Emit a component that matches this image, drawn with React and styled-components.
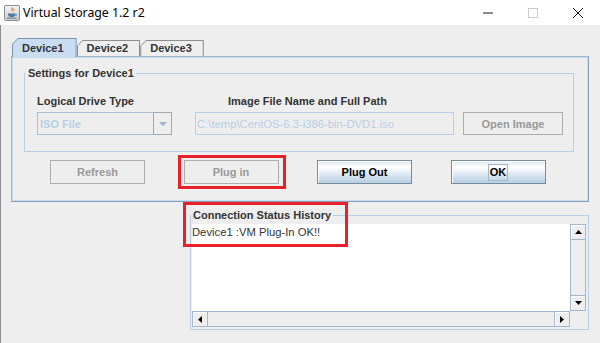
import React from "react";
import styled, { createGlobalStyle } from "styled-components";

const UI = `"Liberation Sans", Arial, sans-serif`;

const GlobalStyle = createGlobalStyle`
  html, body { margin: 0; padding: 0; background: #eeeeee; }
  body { width: 600px; height: 343px; overflow: hidden; font-family: ${UI}; }
  *, *::before, *::after { box-sizing: border-box; }
`;

const Window = styled.div`
  width: 600px;
  height: 343px;
  overflow: hidden;
  display: flex;
  flex-direction: column;
  background: #eeeeee;
`;

const TitleBar = styled.div`
  height: 25px;
  flex: none;
  background: #ffffff;
  display: flex;
  align-items: center;
`;

const AppIcon = styled.svg`
  width: 16px;
  height: 16px;
  margin-left: 4px;
  flex: none;
`;

const TitleText = styled.div`
  margin-left: 3px;
  font-family: "Segoe UI", "Noto Sans", sans-serif;
  font-size: 12.3px;
  color: #000;
  flex: 1;
`;

const Captions = styled.div`
  display: flex;
  height: 100%;
`;

const CaptionButton = styled.div`
  width: 45px;
  height: 100%;
  display: flex;
  align-items: center;
  justify-content: center;
`;

const Body = styled.div`
  flex: 1;
  border-left: 1px solid #8f8f8f;
  padding: 13px 11px 0 10px;
  display: flex;
  flex-direction: column;
`;

const TabStrip = styled.div`
  height: 18px;
  display: flex;
  align-items: flex-end;
  padding-left: 1px;
  position: relative;
  z-index: 1;
`;

const Tab = styled.div`
  position: relative;
  height: ${(p) => (p.$selected ? 19 : 16)}px;
  margin-bottom: ${(p) => (p.$selected ? -1 : 0)}px;
  padding: 0 ${(p) => (p.$selected ? 13 : 12)}px 0 10px;
  display: flex;
  align-items: center;
  font: bold 11px ${UI};
  color: #333333;
  background: ${(p) => (p.$selected ? "#7f93ad" : "#8e8e8e")};
  clip-path: polygon(6px 0, 100% 0, 100% 100%, 0 100%, 0 6px);
  &::before {
    content: "";
    position: absolute;
    inset: 1px 1px 0 1px;
    background: ${(p) => (p.$selected ? "#c8ddf2" : "#eeeeee")};
    clip-path: polygon(5px 0, 100% 0, 100% 100%, 0 100%, 0 5px);
  }
  & > span {
    position: relative;
  }
`;

const TabPanel = styled.div`
  height: 146px;
  flex: none;
  border: 1px solid #a3b7cf;
  border-right-color: #8b9fb8;
  border-bottom-color: #8b9fb8;
  box-shadow: inset 0 0 0 1px #c8ddf2;
  padding: 10px 14px 0 12px;
  display: flex;
  flex-direction: column;
`;

const Group = styled.fieldset`
  margin: 0;
  min-width: 0;
  border: 1px solid #b8cfe5;
  padding: ${(p) => p.$pad};
`;

const GroupTitle = styled.legend`
  margin-left: ${(p) => p.$offset}px;
  padding: 0 2px;
  font: bold 11px/13px ${UI};
  color: #333333;
`;

const SettingsGrid = styled.div`
  display: grid;
  grid-template-columns: 135px 23px 259px 9px 100px;
  grid-template-rows: 14px 23px;
  row-gap: 4px;
  align-items: center;
`;

const FieldLabel = styled.div`
  grid-column: ${(p) => p.$col};
  grid-row: 1;
  margin-left: ${(p) => p.$indent || 0}px;
  font: bold 11px/14px ${UI};
  color: #333333;
  white-space: nowrap;
`;

const Cell = styled.div`
  grid-column: ${(p) => p.$col};
  grid-row: 2;
  height: 23px;
  display: flex;
`;

const ComboValue = styled.div`
  flex: 1;
  border: 1px solid #a9bdd4;
  display: flex;
  align-items: center;
  padding-left: 2px;
  font: bold 11px ${UI};
  color: #b8cfe5;
`;

const ComboArrow = styled.div`
  width: 19px;
  border: 1px solid #a8a8a8;
  margin-left: -1px;
  display: flex;
  align-items: center;
  justify-content: center;
`;

const TextField = styled.div`
  flex: 1;
  border: 1px solid #b8cfe5;
  display: flex;
  align-items: center;
  padding-left: 1px;
  font: 11.25px ${UI};
  color: #b8cfe5;
  white-space: nowrap;
  overflow: hidden;
`;

const Button = styled.div`
  position: relative;
  width: ${(p) => p.$w || 95}px;
  height: ${(p) => p.$h || 24}px;
  flex: none;
  display: flex;
  align-items: center;
  justify-content: center;
  font: bold 11px ${UI};
  white-space: nowrap;
  ${(p) =>
    p.$disabled
      ? `
    border: 1px solid #adadad;
    background: #eeeeee;
    color: #999999;
  `
      : `
    border: 1px solid #7a8a99;
    background: linear-gradient(to bottom, #dde8f3 0%, #ffffff 30%, #dde8f3 60%, #b8cfe5 100%);
    box-shadow: inset 1px 1px 0 #ffffff;
    color: #000000;
  `}
`;

const Focus = styled.span`
  border: 1px solid #a3b8cc;
  padding: 1px 1px;
  line-height: 13px;
`;

const ButtonRow = styled.div`
  display: flex;
  gap: 38.5px;
  margin-top: 8px;
  padding-left: 26px;
`;

const RedMark = styled.div`
  position: absolute;
  left: ${(p) => p.$l}px;
  top: ${(p) => p.$t}px;
  right: ${(p) => p.$r}px;
  bottom: ${(p) => p.$b}px;
  ${(p) => (p.$w ? `width: ${p.$w}px;` : "")}
  ${(p) => (p.$h ? `height: ${p.$h}px;` : "")}
  border: 3px solid #e8202a;
  pointer-events: none;
`;

const HistoryWrap = styled.div`
  position: relative;
  margin: 7px 0 0 179px;
`;

const ScrollPane = styled.div`
  display: grid;
  grid-template-columns: 1fr 16px;
  grid-template-rows: 87px 16px;
`;

const TextArea = styled.div`
  background: #ffffff;
  font: 11.25px/16px ${UI};
  color: #333333;
  white-space: nowrap;
`;

const ScrollBar = styled.div`
  display: flex;
  flex-direction: ${(p) => (p.$vertical ? "column" : "row")};
  background: #eeeeee;
  border: 1px solid #a3b8cc;
`;

const Track = styled.div`
  flex: 1;
`;

const ScrollButton = styled.div`
  width: ${(p) => (p.$vertical ? "100%" : "15px")};
  height: ${(p) => (p.$vertical ? "15px" : "100%")};
  flex: none;
  background: #eeeeee;
  box-shadow: inset 1px 1px 0 #ffffff;
  ${(p) =>
    p.$side === "start"
      ? p.$vertical
        ? "border-bottom: 1px solid #a3b8cc;"
        : "border-right: 1px solid #a3b8cc;"
      : p.$vertical
      ? "border-top: 1px solid #a3b8cc;"
      : "border-left: 1px solid #a3b8cc;"}
  display: flex;
  align-items: center;
  justify-content: center;
`;

const Corner = styled.div`
  background: #eeeeee;
`;

const Arrow = ({ dir, color = "#000" }) => {
  const pts = {
    up: "0,4 7,4 3.5,0",
    down: "0,0 7,0 3.5,4",
    left: "4,0 4,7 0,3.5",
    right: "0,0 0,7 4,3.5",
  }[dir];
  const horiz = dir === "left" || dir === "right";
  return (
    <svg width={horiz ? 4 : 7} height={horiz ? 7 : 4} viewBox={horiz ? "0 0 4 7" : "0 0 7 4"}>
      <polygon points={pts} fill={color} />
    </svg>
  );
};

const ComboTriangle = () => (
  <svg width="8" height="4" viewBox="0 0 8 4">
    <polygon points="0,0 8,0 4,4" fill="#9fb4cd" />
  </svg>
);

const JavaIcon = () => (
  <AppIcon viewBox="0 0 16 16">
    <defs>
      <linearGradient id="jbg" x1="0" y1="0" x2="0" y2="1">
        <stop offset="0" stopColor="#f6f6f6" />
        <stop offset="1" stopColor="#c9c9c9" />
      </linearGradient>
    </defs>
    <rect x="0.5" y="0.5" width="15" height="15" rx="1.5" fill="url(#jbg)" stroke="#8d8d8d" />
    <path d="M8 2.5c-1.4 1.2 1.2 1.8 -0.2 3.6" stroke="#e2761b" strokeWidth="1.2" fill="none" />
    <path d="M9.8 3.5c-0.9 0.8 0.8 1.2 -0.2 2.3" stroke="#e2761b" strokeWidth="1" fill="none" />
    <path d="M4 8.5h7.2v1.2c0 1.6 -1.6 2.4 -3.6 2.4s-3.6 -0.8 -3.6 -2.4z" fill="#4f7ea8" />
    <path d="M11.2 9h0.9c0.9 0 0.9 1.4 0 1.4h-1" stroke="#4f7ea8" strokeWidth="0.8" fill="none" />
    <rect x="3" y="12.6" width="9.5" height="1" fill="#4f7ea8" />
  </AppIcon>
);

export default function App() {
  return (
    <>
      <GlobalStyle />
      <Window>
        <TitleBar>
          <JavaIcon />
          <TitleText>Virtual Storage 1.2 r2</TitleText>
          <Captions>
            <CaptionButton>
              <svg width="10" height="10" viewBox="0 0 10 10">
                <rect x="0" y="4.5" width="10" height="1" fill="#1a1a1a" />
              </svg>
            </CaptionButton>
            <CaptionButton>
              <svg width="10" height="10" viewBox="0 0 10 10">
                <rect x="0.5" y="0.5" width="9" height="9" fill="none" stroke="#cccccc" />
              </svg>
            </CaptionButton>
            <CaptionButton>
              <svg width="10" height="10" viewBox="0 0 10 10">
                <path d="M0 0L10 10M10 0L0 10" stroke="#1a1a1a" strokeWidth="1" />
              </svg>
            </CaptionButton>
          </Captions>
        </TitleBar>

        <Body>
          <TabStrip>
            <Tab $selected><span>Device1</span></Tab>
            <Tab><span>Device2</span></Tab>
            <Tab><span>Device3</span></Tab>
          </TabStrip>
          <TabPanel>
            <Group $pad="14px 12px 16px 12px">
              <GroupTitle $offset={-11}>Settings for Device1</GroupTitle>
              <SettingsGrid>
                <FieldLabel $col={1}>Logical Drive Type</FieldLabel>
                <FieldLabel $col={3} $indent={33}>Image File Name and Full Path</FieldLabel>
                <Cell $col={1}>
                  <ComboValue>ISO File</ComboValue>
                  <ComboArrow><ComboTriangle /></ComboArrow>
                </Cell>
                <Cell $col={3}>
                  <TextField>C:\temp\CentOS-6.3-i386-bin-DVD1.iso</TextField>
                </Cell>
                <Cell $col={5}>
                  <Button $disabled $w={100} $h={23}>Open Image</Button>
                </Cell>
              </SettingsGrid>
            </Group>
            <ButtonRow>
              <Button $disabled>Refresh</Button>
              <Button $disabled>
                Plug in
                <RedMark $l={-7} $r={-8} $t={-6} $b={-6} />
              </Button>
              <Button>Plug Out</Button>
              <Button><Focus>OK</Focus></Button>
            </ButtonRow>
          </TabPanel>

          <HistoryWrap>
            <Group $pad="2px 2px 2px 1px">
              <GroupTitle $offset={-1}>Connection Status History</GroupTitle>
              <ScrollPane>
                <TextArea>Device1 :VM Plug-In OK!!</TextArea>
                <ScrollBar $vertical>
                  <ScrollButton $vertical $side="start"><Arrow dir="up" /></ScrollButton>
                  <Track />
                  <ScrollButton $vertical $side="end"><Arrow dir="down" /></ScrollButton>
                </ScrollBar>
                <ScrollBar>
                  <ScrollButton $side="start"><Arrow dir="left" /></ScrollButton>
                  <Track />
                  <ScrollButton $side="end"><Arrow dir="right" /></ScrollButton>
                </ScrollBar>
                <Corner />
              </ScrollPane>
            </Group>
            <RedMark $l={-7} $t={-7} $w={165} $h={45} />
          </HistoryWrap>
        </Body>
      </Window>
    </>
  );
}
